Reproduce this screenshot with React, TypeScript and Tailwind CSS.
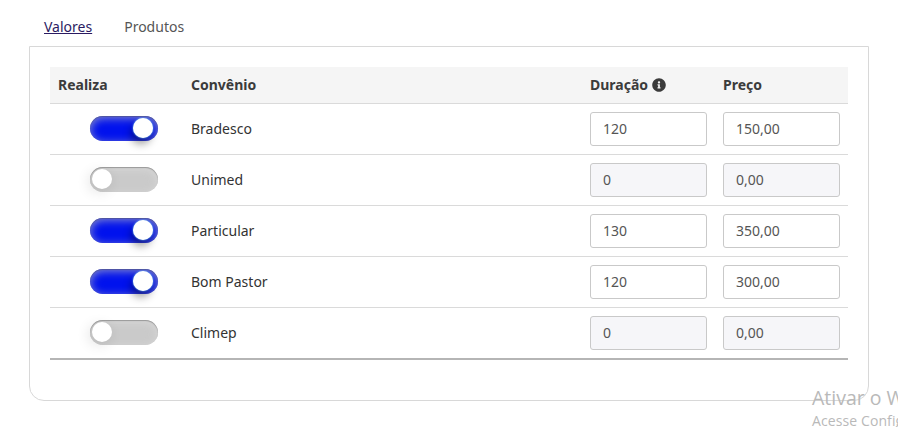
import { useState } from "react";
import clsx from "clsx";
import { FaInfoCircle } from "react-icons/fa";

type Convenio = {
  nome: string;
  ativo: boolean;
  duracao: string;
  preco: string;
};

const conveniosIniciais: Convenio[] = [
  { nome: "Bradesco", ativo: true, duracao: "120", preco: "150,00" },
  { nome: "Unimed", ativo: false, duracao: "0", preco: "0,00" },
  { nome: "Particular", ativo: true, duracao: "130", preco: "350,00" },
  { nome: "Bom Pastor", ativo: true, duracao: "120", preco: "300,00" },
  { nome: "Climep", ativo: false, duracao: "0", preco: "0,00" },
];

function Toggle({ checked, onChange }: { checked: boolean; onChange: () => void }) {
  return (
    <button
      type="button"
      role="switch"
      aria-checked={checked}
      onClick={onChange}
      className={clsx(
        "flex h-[25px] w-[68px] items-start rounded-full px-[2px] pt-[2px]",
        checked
          ? "justify-end bg-[#0012ee] pr-[5px] shadow-[inset_0_1px_1px_rgba(60,60,60,0.35),inset_0_2px_10px_rgba(190,190,190,0.75)]"
          : "justify-start bg-[#cacaca] shadow-[inset_0_1px_1px_#989898,inset_0_2px_10px_rgba(225,225,225,0.6)]"
      )}
    >
      <span
        className={clsx(
          "h-5 w-5 rounded-full bg-white",
          checked
            ? "shadow-[0_0_2px_#8df,-2px_6px_9px_rgba(0,0,0,0.4)]"
            : "shadow-[-3px_3px_14px_rgba(0,0,0,0.12)]"
        )}
      />
    </button>
  );
}

function Campo({ value, disabled, label }: { value: string; disabled: boolean; label: string }) {
  return (
    <input
      type="text"
      aria-label={label}
      defaultValue={value}
      disabled={disabled}
      className="block h-[34px] w-[117px] rounded-[3px] border border-[#c9c9c9] bg-white px-3 pb-px text-[14px] text-[#555] disabled:bg-[#f6f6f9]"
    />
  );
}

export default function App() {
  const [convenios, setConvenios] = useState(conveniosIniciais);

  const alternar = (index: number) => {
    setConvenios(convenios.map((c, i) => (i === index ? { ...c, ativo: !c.ativo } : c)));
  };

  return (
    <div className="relative h-[427px] w-full overflow-hidden bg-white pl-[29px] font-['Noto_Sans',sans-serif] text-[14px] text-[#333]">
      <nav className="flex h-[46px] gap-8 pl-[15px] pt-[17px] leading-5">
        <a href="#valores" className="h-5 text-[#2b1b62] underline">
          Valores
        </a>
        <a href="#produtos" className="h-5 text-[#555]">
          Produtos
        </a>
      </nav>

      <div className="h-[355px] w-[840px] rounded-b-[15px] border border-[#d8d8d8] px-5 pt-5">
        <div className="border-b-2 border-[#b5b5b5]">
          <div className="grid h-[37px] grid-cols-[133px_399px_133px_133px] border-b border-[#dadada] bg-[#f5f5f5] pt-2 font-bold leading-5 text-[#3b3b3b]">
            <div className="px-2">Realiza</div>
            <div className="px-2">Convênio</div>
            <div className="flex h-5 items-center gap-1 px-2">
              Duração <FaInfoCircle className="h-[14px] w-[14px]" />
            </div>
            <div className="px-2">Preço</div>
          </div>

          {convenios.map((convenio, index) => (
            <div
              key={convenio.nome}
              className="grid h-[51px] grid-cols-[133px_399px_133px_133px] items-start border-b border-[#dadada] pt-2 leading-5 last:h-[50px] last:border-b-0"
            >
              <div className="pl-10 pt-1">
                <Toggle checked={convenio.ativo} onChange={() => alternar(index)} />
              </div>
              <div className="px-2 pt-[7px]">{convenio.nome}</div>
              <div className="px-2">
                <Campo value={convenio.duracao} disabled={!convenio.ativo} label="Duração" />
              </div>
              <div className="px-2">
                <Campo value={convenio.preco} disabled={!convenio.ativo} label="Preço" />
              </div>
            </div>
          ))}
        </div>
      </div>

      {/* aviso de ativação sobreposto */}
      <div className="pointer-events-none absolute left-[812px] top-[385px] whitespace-nowrap font-['Open_Sans',sans-serif] text-[#b9b9b9]">
        <div className="text-[19.5px] leading-[26px]">Ativar o W</div>
        <div className="text-[14px] leading-5 tracking-[0.1px]">Acesse Config</div>
      </div>
    </div>
  );
}
